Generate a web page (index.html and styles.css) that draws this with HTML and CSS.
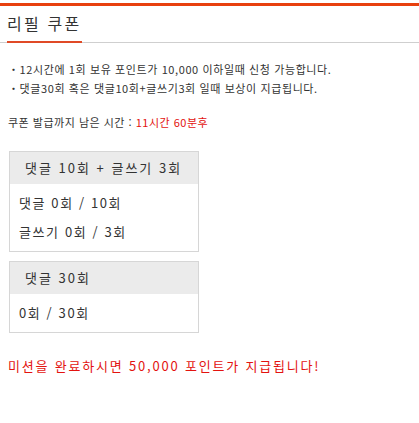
FILE: index.html
```html
<!DOCTYPE html>
<html lang="ko">
<head>
<meta charset="utf-8">
<link rel="stylesheet" href="styles.css">
</head>
<body>
<div class="topbar"></div>
<div class="tabs">
  <div class="tab">리필 쿠폰</div>
</div>
<ul class="notes">
  <li>・12시간에 1회 보유 포인트가 10,000 이하일때 신청 가능합니다.</li>
  <li>・댓글30회 혹은 댓글10회+글쓰기3회 일때 보상이 지급됩니다.</li>
</ul>
<p class="remain">쿠폰 발급까지 남은 시간 : <span class="red">11시간 60분후</span></p>
<div class="mission">
  <div class="mission-head">댓글 10회 + 글쓰기 3회</div>
  <div class="mission-body">
    <div class="row">댓글 0회 / 10회</div>
    <div class="row">글쓰기 0회 / 3회</div>
  </div>
</div>
<div class="mission">
  <div class="mission-head">댓글 30회</div>
  <div class="mission-body">
    <div class="row">0회 / 30회</div>
  </div>
</div>
<p class="reward">미션을 완료하시면 50,000 포인트가 지급됩니다!</p>
</body>
</html>
```
FILE: styles.css
```css
* { box-sizing: border-box; }
body {
  margin: 0;
  font-family: "Noto Sans CJK KR", "Noto Sans", sans-serif;
  color: #333;
  background: #fff;
}
.topbar {
  margin-top: 3px;
  height: 3px;
  background: #e8400f;
}
.tabs {
  border-bottom: 1px solid #cfcfcf;
  padding-left: 7px;
  height: 37px;
}
.tab {
  display: inline-block;
  font-size: 16px;
  line-height: 20px;
  padding-top: 7px;
  padding-right: 1px;
  height: 37px;
  border-bottom: 2px solid #e04a26;
  color: #333;
  letter-spacing: 2.2px;
}
.notes {
  list-style: none;
  margin: 17px 0 0 0;
  padding: 0 0 0 8px;
  font-size: 11px;
  line-height: 19px;
  letter-spacing: 0.6px;
  color: #333;
}
.remain {
  margin: 17px 0 0 8px;
  font-size: 11px;
  line-height: 14px;
  letter-spacing: 0.5px;
}
.red { color: #e3130f; }
.mission {
  margin: 22px 0 0 9px;
  width: 190px;
  border: 1px solid #d6d6d6;
}
.mission + .mission { margin-top: 9px; }
.mission-head {
  background: #ebebeb;
  font-size: 13px;
  line-height: 32px;
  padding-left: 15px;
  letter-spacing: 2px;
}
.mission-body {
  padding: 4px 0 5px 9px;
  font-size: 13px;
}
.row {
  line-height: 29px;
  letter-spacing: 1.6px;
}
.reward {
  margin: 23px 0 0 8px;
  font-size: 13px;
  color: #e3130f;
  letter-spacing: 1.8px;
}
```
